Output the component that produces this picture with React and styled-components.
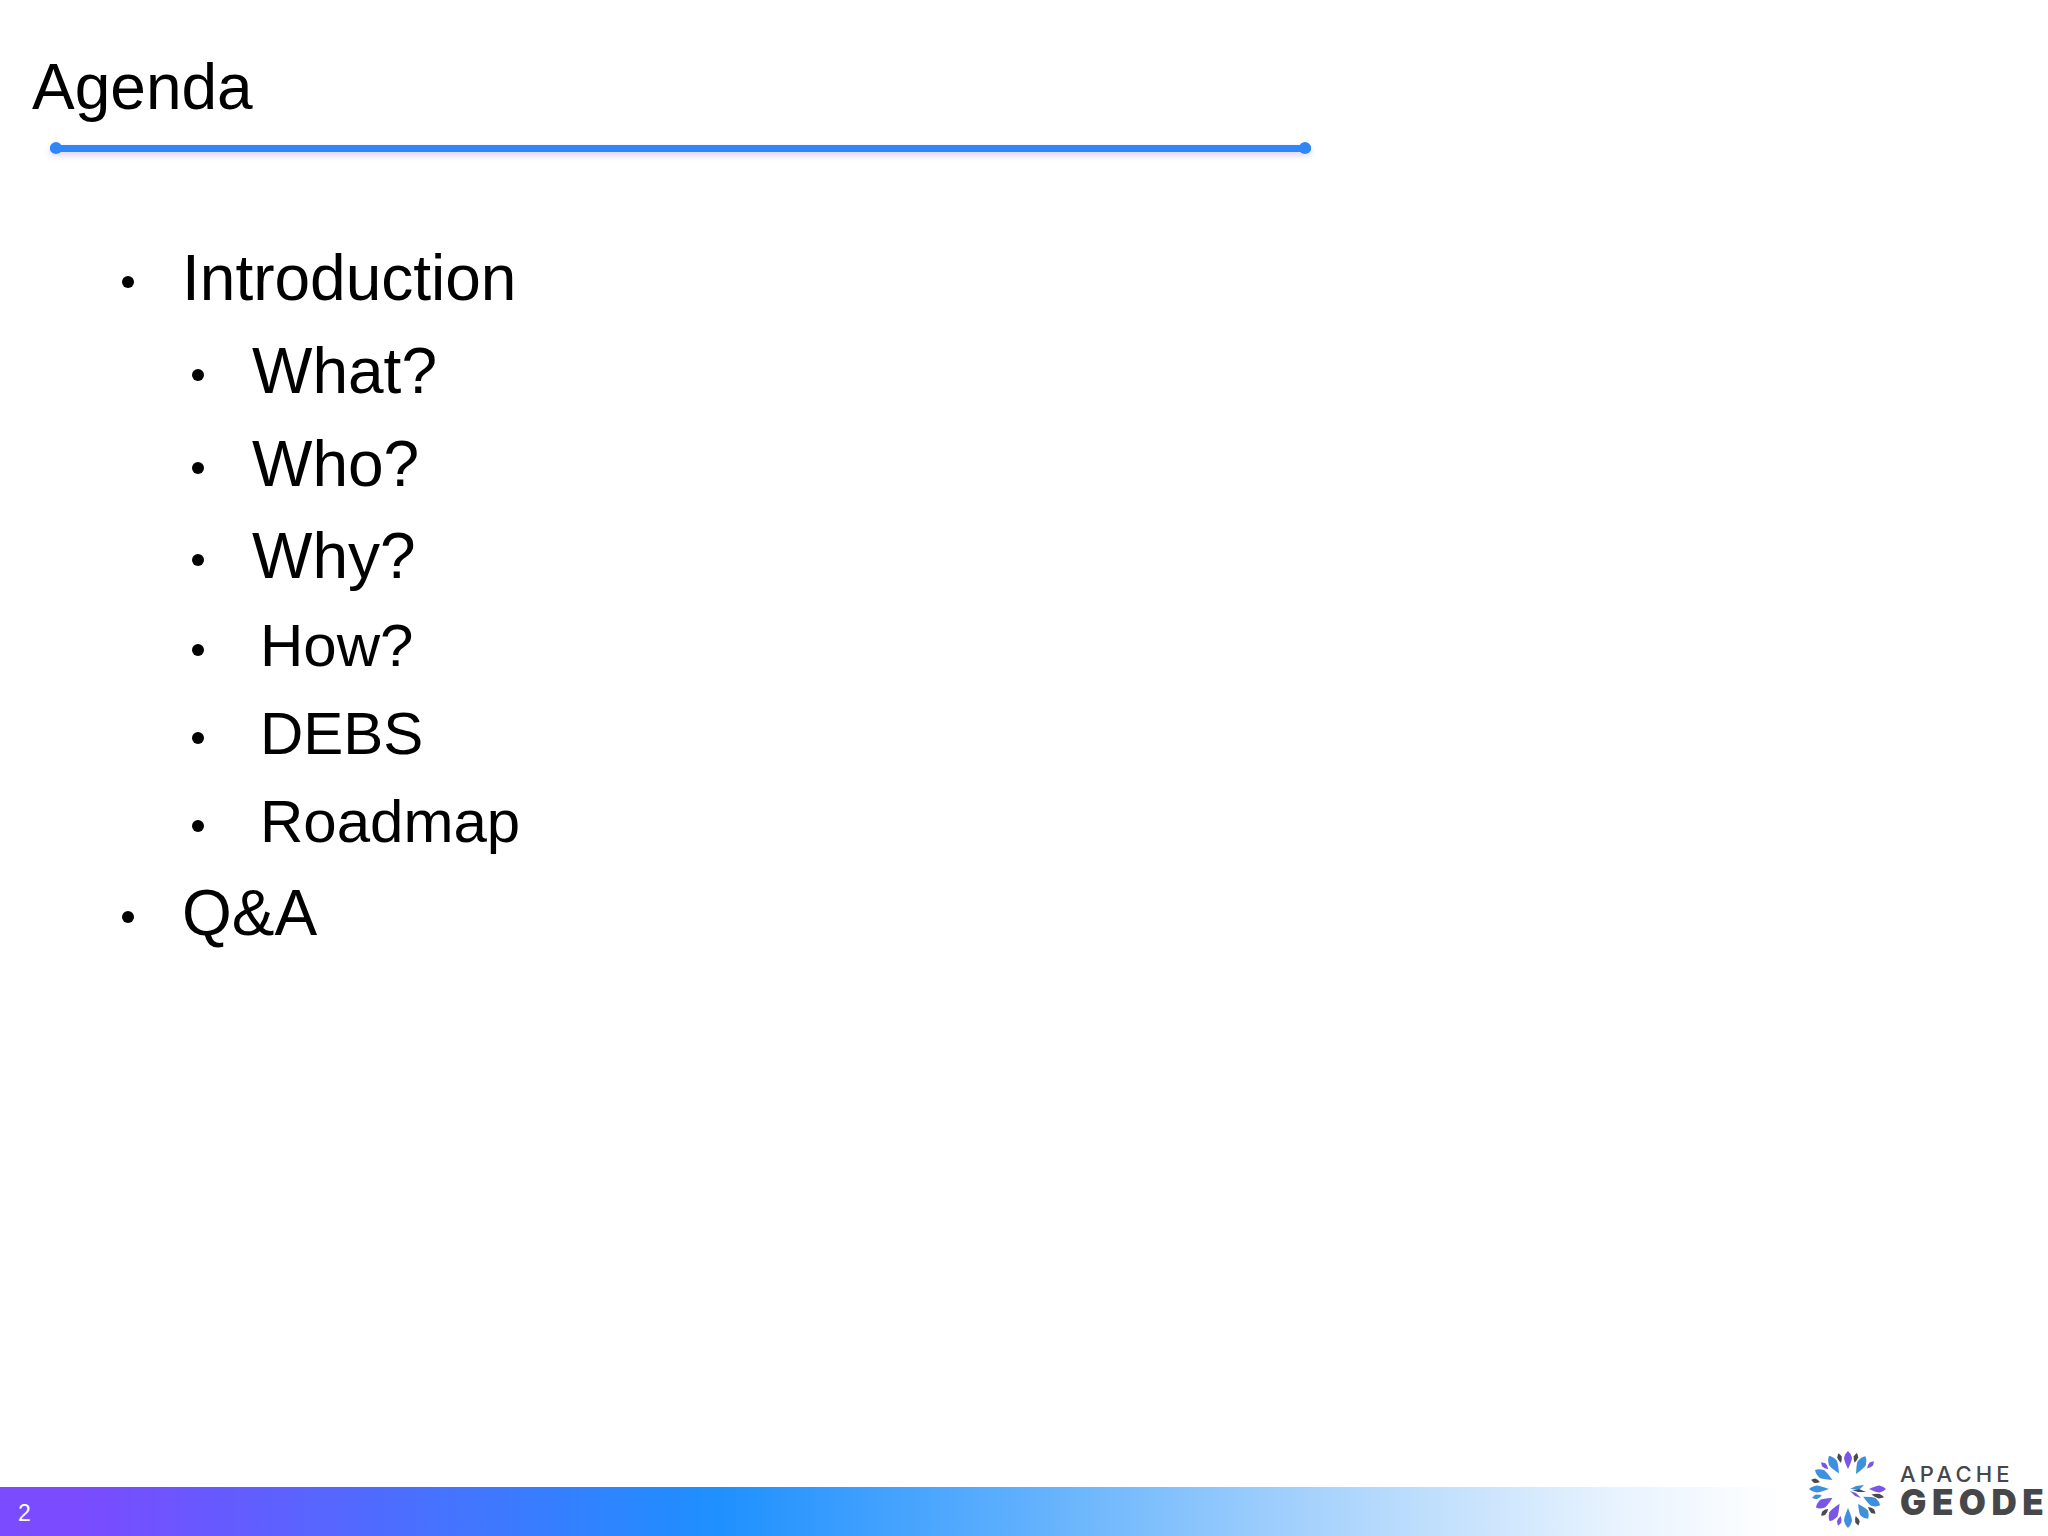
import React from 'react'
import styled, { createGlobalStyle } from 'styled-components'

const items = [
  { text: 'Introduction', level: 0, size: 64, pitch: 93 },
  { text: 'What?', level: 1, size: 64, pitch: 93 },
  { text: 'Who?', level: 1, size: 64, pitch: 93 },
  { text: 'Why?', level: 1, size: 64, pitch: 91 },
  { text: 'How?', level: 2, size: 60, pitch: 89 },
  { text: 'DEBS', level: 2, size: 60, pitch: 87 },
  { text: 'Roadmap', level: 2, size: 60, pitch: 89 },
  { text: 'Q&A', level: 0, size: 64, pitch: 93 }
]

const PURPLE = '#7a55e6'
const BLUE = '#3f90dc'
const DARK = '#4a4a4c'

// angle clockwise from 12 o'clock, inner and outer radius, width, colour
const petals = [
  [0, 20, 38, 8, PURPLE],
  [14, 27, 37, 4.5, DARK],
  [28, 17, 37, 9, BLUE],
  [43, 28, 38, 4.5, PURPLE],
  [90, 21, 38, 7, PURPLE],
  [103, 24, 37, 4.5, DARK],
  [117, 17, 36, 9, BLUE],
  [132, 27, 37, 4.5, DARK],
  [146, 18, 36, 9, BLUE],
  [164, 28, 38, 4.5, DARK],
  [180, 19, 39, 8, BLUE],
  [195, 28, 38, 4.5, PURPLE],
  [210, 17, 37, 9, PURPLE],
  [225, 28, 38, 4.5, DARK],
  [240, 18, 37, 9, PURPLE],
  [256, 27, 37, 4.5, BLUE],
  [270, 19, 39, 7, BLUE],
  [284, 29, 38, 4.5, DARK],
  [300, 18, 38, 9, BLUE],
  [315, 28, 38, 4.5, PURPLE],
  [330, 18, 38, 9, BLUE],
  [345, 27, 37, 4.5, DARK]
]

const GeodeMark = () =>
  <Mark viewBox="0 0 84 84">
    <g transform="translate(42 42)">
      {petals.map(([angle, r1, r2, w, color]) => {
        const mid = r1 + (r2 - r1) * 0.62
        return (
          <path
            key={angle}
            transform={`rotate(${angle})`}
            fill={color}
            d={`M0 ${-r1} Q${w / 2} ${-mid + 3} ${w / 2} ${-mid} Q${w / 3} ${-r2 + 2} 0 ${-r2} Q${-w / 3} ${-r2 + 2} ${-w / 2} ${-mid} Q${-w / 2} ${-mid + 3} 0 ${-r1} Z`}
          />
        )
      })}
    </g>
    <path d="M44 42 L50 39 L58 38 L54 42 Z" fill={BLUE} />
    <path d="M46 43 L53 42 L60 45 L52 45 Z" fill={DARK} />
    <path d="M44 44 L50 46 L55 51 L49 49 Z" fill={PURPLE} />
  </Mark>

export default () =>
  <Slide>
    <GlobalStyle />
    <Header>
      <Title>Agenda</Title>
      <Rule />
    </Header>
    <List>
      {items.map(item =>
        <Item key={item.text} $level={item.level} $size={item.size} $pitch={item.pitch}>
          <Bullet $gap={item.level === 2 ? 56 : 48} />
          {item.text}
        </Item>
      )}
    </List>
    <Footer>
      <PageNumber>2</PageNumber>
    </Footer>
    <Logo>
      <GeodeMark />
      <Wordmark>
        <Apache>APACHE</Apache>
        <Geode>GEODE</Geode>
      </Wordmark>
    </Logo>
  </Slide>

const GlobalStyle = createGlobalStyle`
  html, body {
    margin: 0;
    padding: 0;
    background: white;
  }
`

const Slide = styled.div`
  position: relative;
  display: flex;
  flex-direction: column;
  width: 2048px;
  height: 1536px;
  overflow: hidden;
  background: white;
  color: black;
  font-family: "Liberation Sans", Arial, sans-serif;
`

const Header = styled.header`
  padding: 51px 0 0 32px;
`

const Title = styled.h1`
  margin: 0;
  font-size: 64px;
  font-weight: 400;
  line-height: 72px;
`

const Rule = styled.div`
  position: relative;
  width: 1261px;
  height: 7px;
  margin: 22px 0 0 18px;
  border-radius: 3px;
  background: #2f86f6;
  box-shadow: 0 3px 6px rgba(150, 110, 255, 0.35);
  filter: blur(0.5px);

  &::before,
  &::after {
    content: '';
    position: absolute;
    top: -3px;
    width: 12px;
    height: 12px;
    border-radius: 50%;
    background: #2f86f6;
  }

  &::before {
    left: 0;
  }

  &::after {
    right: 0;
  }
`

const List = styled.ul`
  flex: 1;
  margin: 0;
  padding: 79px 0 0;
  list-style: none;
`

const Item = styled.li`
  display: flex;
  align-items: center;
  height: ${props => props.$pitch}px;
  padding-left: ${props => (props.$level === 0 ? 122 : 192)}px;
  font-size: ${props => props.$size}px;
  line-height: 72px;
`

const Bullet = styled.span`
  flex: none;
  width: 12px;
  height: 12px;
  margin-top: 8px;
  margin-right: ${props => props.$gap}px;
  border-radius: 50%;
  background: black;
`

const Footer = styled.footer`
  display: flex;
  align-items: center;
  height: 49px;
  padding: 4px 0 0 18px;
  box-sizing: border-box;
  background: linear-gradient(90deg, #7a4bff 0%, #7a4bff 4%, #1e90ff 35%, #5fb0fd 50%, #a6d2fc 64%, #e8f3fe 79%, #ffffff 87%);
`

const PageNumber = styled.span`
  color: white;
  font-size: 23px;
`

const Logo = styled.div`
  position: absolute;
  left: 1806px;
  bottom: 5px;
  display: flex;
  align-items: center;
  gap: 10px;
`

const Mark = styled.svg`
  flex: none;
  width: 84px;
  height: 84px;
`

const Wordmark = styled.div`
  display: flex;
  flex-direction: column;
  font-family: Inter, sans-serif;
  color: #47474a;
`

const Apache = styled.span`
  font-size: 22px;
  font-weight: 500;
  line-height: 26px;
  letter-spacing: 4.2px;
`

const Geode = styled.span`
  font-size: 35px;
  font-weight: 900;
  line-height: 31px;
  letter-spacing: 5.5px;
`
